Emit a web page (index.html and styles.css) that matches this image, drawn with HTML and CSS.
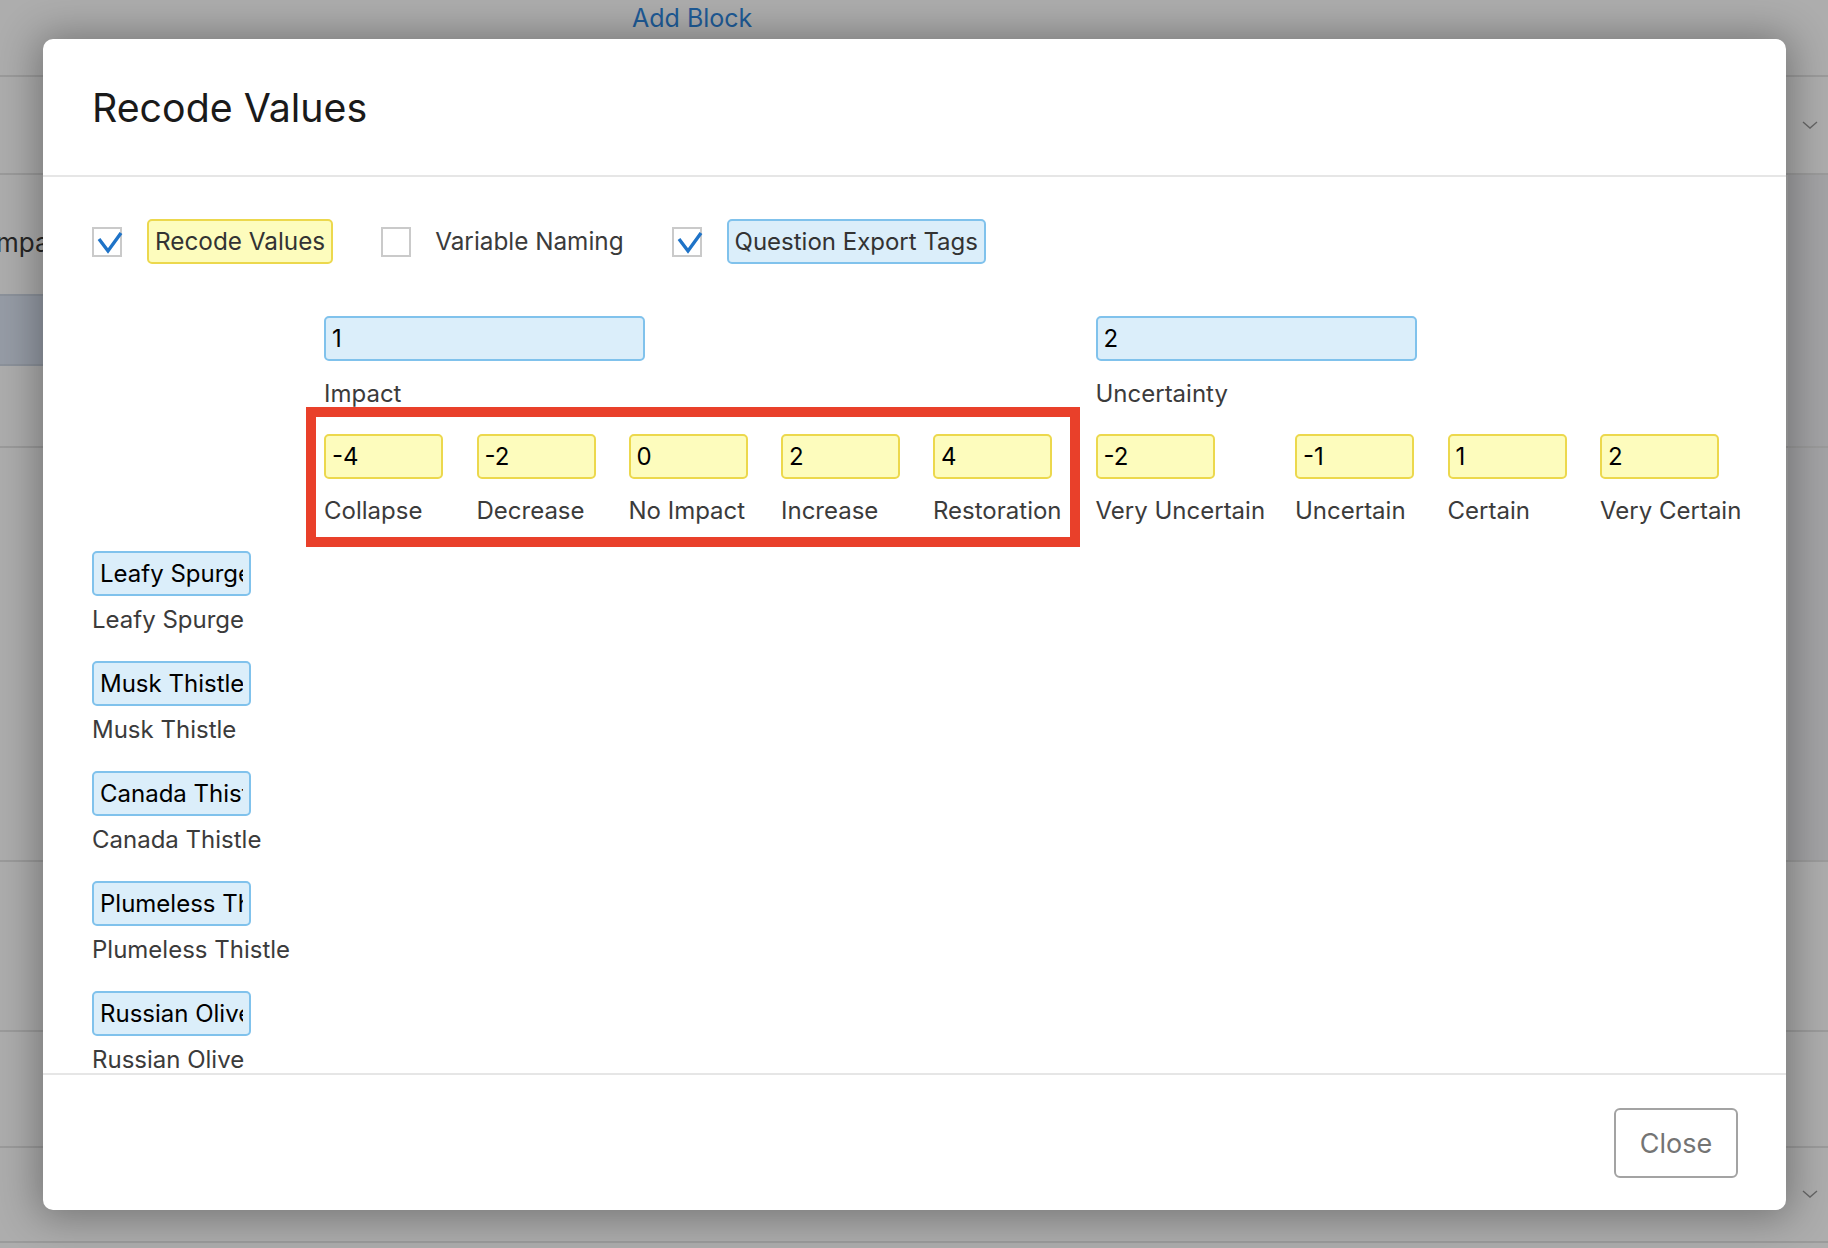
FILE: index.html
```html
<!DOCTYPE html>
<html lang="en">
<head>
<meta charset="utf-8">
<title>Recode Values</title>
<link rel="stylesheet" href="styles.css">
</head>
<body>
<div class="page">
  <div class="bg-row r1"><span class="add-block">Add Block</span></div>
  <div class="bg-row r2"><svg class="chev" width="16" height="9" viewBox="0 0 16 9"><polyline points="1,1 8,7 15,1" fill="none" stroke="#666" stroke-width="1.4"/></svg></div>
  <div class="bg-row r3"><span class="bg-impact">Impact</span><div class="band"></div></div>
  <div class="bg-row r4"></div>
  <div class="bg-row r5"></div>
  <div class="bg-row r6"></div>
  <div class="bg-row r7"><svg class="chev" width="16" height="9" viewBox="0 0 16 9"><polyline points="1,1 8,7 15,1" fill="none" stroke="#666" stroke-width="1.4"/></svg></div>
</div>

<div class="modal">
  <div class="modal-header">
    <h1 class="title">Recode Values</h1>
  </div>
  <div class="modal-body">
    <div class="options">
      <div class="opt">
        <span class="cb"><svg width="29" height="29" viewBox="0 0 29 29"><polyline points="5,11 14,23 27,5" fill="none" stroke="#1f73c7" stroke-width="3.4" stroke-linejoin="miter"/></svg></span>
        <span class="opt-label hl-yellow">Recode Values</span>
      </div>
      <div class="opt">
        <span class="cb"></span>
        <span class="opt-label plain">Variable Naming</span>
      </div>
      <div class="opt">
        <span class="cb"><svg width="29" height="29" viewBox="0 0 29 29"><polyline points="5,11 14,23 27,5" fill="none" stroke="#1f73c7" stroke-width="3.4" stroke-linejoin="miter"/></svg></span>
        <span class="opt-label hl-blue">Question Export Tags</span>
      </div>
    </div>

    <div class="grid">
      <div class="cell head-a c-impact"><input class="fld blue wide" type="text" value="1"><span class="lbl">Impact</span></div>
      <div class="cell head-a c-unc"><input class="fld blue wide" type="text" value="2"><span class="lbl">Uncertainty</span></div>

      <div class="cell head-b c2"><input class="fld yellow" type="text" value="-4"><span class="lbl">Collapse</span></div>
      <div class="cell head-b"><input class="fld yellow" type="text" value="-2"><span class="lbl">Decrease</span></div>
      <div class="cell head-b"><input class="fld yellow" type="text" value="0"><span class="lbl">No Impact</span></div>
      <div class="cell head-b"><input class="fld yellow" type="text" value="2"><span class="lbl">Increase</span></div>
      <div class="cell head-b"><input class="fld yellow" type="text" value="4"><span class="lbl">Restoration</span></div>
      <div class="cell head-b"><input class="fld yellow" type="text" value="-2"><span class="lbl">Very Uncertain</span></div>
      <div class="cell head-b"><input class="fld yellow" type="text" value="-1"><span class="lbl">Uncertain</span></div>
      <div class="cell head-b"><input class="fld yellow" type="text" value="1"><span class="lbl">Certain</span></div>
      <div class="cell head-b"><input class="fld yellow" type="text" value="2"><span class="lbl">Very Certain</span></div>

      <div class="cell item"><input class="fld blue row" type="text" value="Leafy Spurge"><span class="lbl">Leafy Spurge</span></div>
      <div class="cell item"><input class="fld blue row" type="text" value="Musk Thistle"><span class="lbl">Musk Thistle</span></div>
      <div class="cell item"><input class="fld blue row" type="text" value="Canada Thistle"><span class="lbl">Canada Thistle</span></div>
      <div class="cell item"><input class="fld blue row" type="text" value="Plumeless Thistle"><span class="lbl">Plumeless Thistle</span></div>
      <div class="cell item"><input class="fld blue row" type="text" value="Russian Olive"><span class="lbl">Russian Olive</span></div>
    </div>
  </div>
  <div class="modal-footer">
    <button class="close-btn" type="button">Close</button>
  </div>
  <div class="annot"></div>
</div>
</body>
</html>
```

FILE: styles.css
```css
* { box-sizing: border-box; }
html, body { margin: 0; padding: 0; }
body {
  width: 1828px;
  height: 1248px;
  overflow: hidden;
  position: relative;
  background: #adadad;
  font-family: Inter, "Liberation Sans", sans-serif;
}

/* background page (dimmed) */
.page { width: 1828px; }
.bg-row {
  border-bottom: 2px solid #9b9b9b;
  position: relative;
  display: flex;
  align-items: center;
}
.r1 { height: 77px; align-items: flex-start; }
.r2 { height: 98px; justify-content: flex-end; padding-right: 10px; }
.r3 { height: 273px; flex-direction: column; align-items: flex-start; background: linear-gradient(to right, transparent 1788px, #a3a3a5 1788px); }
.r4 { height: 414px; background: linear-gradient(to right, transparent 1788px, #a3a3a5 1788px); }
.r5 { height: 170px; }
.r6 { height: 116px; }
.r7 { height: 95px; justify-content: flex-end; padding-right: 10px; }

.add-block {
  margin-left: 632px;
  margin-top: 3px;
  font-size: 25px;
  color: #1e5b97;
  line-height: 30px;
}
.bg-impact {
  margin-left: -11px;
  margin-top: 53px;
  font-size: 26px;
  line-height: 30px;
  color: #262626;
}
.band {
  margin-top: 36px;
  width: 120px;
  height: 72px;
  background: #969ca6;
  border-top: 2px solid #8c929b;
  border-bottom: 2px solid #8c929b;
}

/* modal */
.modal {
  position: absolute;
  left: 43px;
  top: 39px;
  width: 1743px;
  height: 1171px;
  background: #fff;
  border-radius: 10px;
  box-shadow: 0 2px 40px 6px rgba(0,0,0,0.32);
  display: flex;
  flex-direction: column;
  overflow: hidden;
}
.modal-header {
  height: 138px;
  padding: 45px 49px 0;
  border-bottom: 2px solid #e6e6e6;
  flex: none;
}
.title {
  margin: 0;
  font-size: 39.3px;
  line-height: 48px;
  font-weight: 400;
  color: #1a1a1a;
}
.modal-body {
  height: 898px;
  flex: none;
  overflow: hidden;
  padding: 42px 49px 0;
  border-bottom: 2px solid #e6e6e6;
}
.options {
  display: flex;
  align-items: center;
  height: 45px;
}
.opt { display: flex; align-items: center; margin-right: 48px; }
.cb {
  width: 30px;
  height: 30px;
  border: 2px solid #cacaca;
  background: #fff;
  display: inline-flex;
  align-items: center;
  justify-content: center;
  overflow: visible;
  position: relative;
}
.cb svg { position: absolute; left: 0; top: -1px; }
.opt-label {
  font-size: 24.3px;
  line-height: 41px;
  color: #333;
  margin-left: 25px;
}
.opt-label.plain { margin-left: 24px; color: #3b3b3b; }
.hl-yellow, .hl-blue {
  border: 2px solid;
  border-radius: 5px;
  padding: 0 6px;
}
.hl-yellow { background: #fdfcbd; border-color: #ecd84d; }
.hl-blue { background: #dbeefa; border-color: #80c2ec; font-size: 24px; }

/* grid of fields */
.grid {
  margin-top: 52px;
  display: grid;
  grid-template-columns: 232px 152.5px 152px 152.5px 152px 162.5px 199.5px 152.5px 152.5px auto;
  align-items: start;
}
.cell { display: flex; flex-direction: column; align-items: flex-start; }
.c-impact { grid-column: 2 / span 5; }
.c-unc { grid-column: 7 / span 4; }
.c2 { grid-column: 2; }
.item { grid-column: 1; }

.fld {
  font-family: inherit;
  font-size: 24px;
  color: #000;
  height: 45px;
  border: 2px solid;
  border-radius: 5px;
  padding: 0 6px;
  margin: 0;
  outline: none;
  text-overflow: clip;
}
.fld.blue { background: #dbeefa; border-color: #80c2ec; }
.fld.yellow { background: #fdfcbd; border-color: #ecd84d; width: 119px; }
.fld.wide { width: 321px; }
.fld.row { width: 159px; }

.lbl {
  font-size: 24px;
  line-height: 36px;
  color: #3b3b3b;
  white-space: nowrap;
  margin-bottom: 22px;
}
.head-a .lbl { margin-top: 15px; }
.head-b .lbl { margin-top: 14px; }
.item .lbl { margin-top: 6px; margin-bottom: 23px; }

.modal-footer {
  flex: 1;
  display: flex;
  justify-content: flex-end;
  align-items: flex-start;
  padding: 33px 48px 0 0;
}
.close-btn {
  width: 124px;
  height: 70px;
  border: 2px solid #a3a3a3;
  border-radius: 6px;
  background: #fff;
  font-family: inherit;
  font-size: 27px;
  color: #747474;
  padding: 0;
}

/* red annotation rectangle drawn over the screenshot */
.annot {
  position: absolute;
  left: 263px;
  top: 368px;
  width: 774px;
  height: 140px;
  border: 10px solid #e9402a;
  pointer-events: none;
}
```
